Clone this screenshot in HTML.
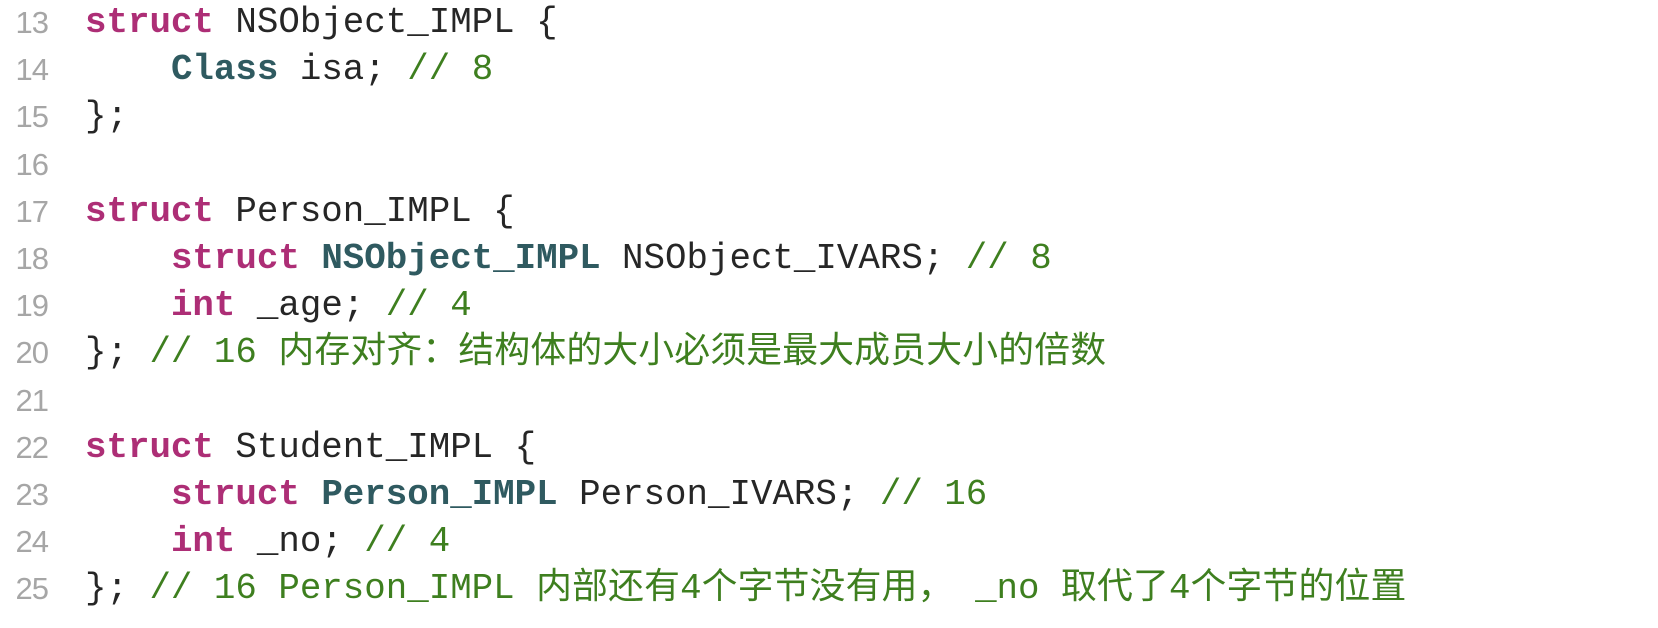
<!DOCTYPE html>
<html><head><meta charset="utf-8"><style>
html,body{margin:0;padding:0;background:#fff;width:1658px;height:628px;overflow:hidden}
.wrap{position:absolute;top:-1px;left:0}
.l{height:47.2px;line-height:47.2px;position:relative;white-space:pre;font-family:"Liberation Mono","Noto Sans CJK SC",monospace;font-size:35.8px;color:#262626}
.n{position:absolute;left:0;width:48px;text-align:right;font-family:"Liberation Sans",sans-serif;font-size:31px;color:#a6a6a6;letter-spacing:-1px}
.c{position:absolute;left:85px}
.k{color:#ad2e76;font-weight:bold}
.t{color:#2f5a60;font-weight:bold}
.g{color:#3e7f1f}
.z{letter-spacing:0.2px;font-family:"Noto Sans CJK SC",sans-serif;font-size:35.8px;line-height:1px}
</style></head><body><div class="wrap">
<div class="l"><span class="n">13</span><span class="c"><span class="k">struct</span> NSObject_IMPL {</span></div>
<div class="l"><span class="n">14</span><span class="c">    <span class="t">Class</span> isa; <span class="g">// 8</span></span></div>
<div class="l"><span class="n">15</span><span class="c">};</span></div>
<div class="l"><span class="n">16</span><span class="c"></span></div>
<div class="l"><span class="n">17</span><span class="c"><span class="k">struct</span> Person_IMPL {</span></div>
<div class="l"><span class="n">18</span><span class="c">    <span class="k">struct</span> <span class="t">NSObject_IMPL</span> NSObject_IVARS; <span class="g">// 8</span></span></div>
<div class="l"><span class="n">19</span><span class="c">    <span class="k">int</span> _age; <span class="g">// 4</span></span></div>
<div class="l"><span class="n">20</span><span class="c">}; <span class="g">// 16 <span class="z">内存对齐：结构体的大小必须是最大成员大小的倍数</span></span></span></div>
<div class="l"><span class="n">21</span><span class="c"></span></div>
<div class="l"><span class="n">22</span><span class="c"><span class="k">struct</span> Student_IMPL {</span></div>
<div class="l"><span class="n">23</span><span class="c">    <span class="k">struct</span> <span class="t">Person_IMPL</span> Person_IVARS; <span class="g">// 16</span></span></div>
<div class="l"><span class="n">24</span><span class="c">    <span class="k">int</span> _no; <span class="g">// 4</span></span></div>
<div class="l"><span class="n">25</span><span class="c">}; <span class="g">// 16 Person_IMPL <span class="z">内部还有</span>4<span class="z">个字节没有用，</span> _no <span class="z">取代了</span>4<span class="z">个字节的位置</span></span></span></div>
</div></body></html>
